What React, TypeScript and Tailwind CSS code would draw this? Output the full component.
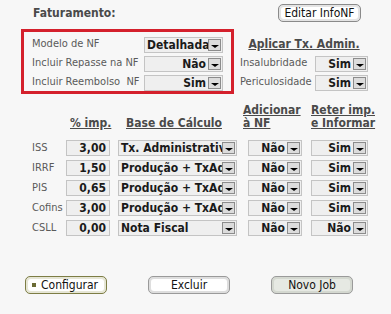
import React from 'react'

const font = { fontFamily: '"DejaVu Sans Condensed", "DejaVu Sans", Tahoma, sans-serif' }

interface SelectProps {
  value: string
  width: string
  align?: 'left' | 'right'
}

function Select({ value, width, align = 'right' }: SelectProps) {
  return (
    <div className={`${width} h-[16px] flex items-stretch border border-[#c4c4c4] bg-[#efefef]`}>
      <div
        className={`flex-1 flex items-center overflow-hidden whitespace-nowrap px-[2px] text-[12px] font-bold text-[#1a1a1a] leading-none ${
          align === 'left' ? 'justify-start' : 'justify-end'
        }`}
      >
        {value}
      </div>
      <div className="w-[13px] my-[1px] mr-[1px] border border-[#8c8c8c] bg-[#dcdcdc] flex items-end justify-center pb-[2px]">
        <div className="w-0 h-0 border-l-[4px] border-r-[4px] border-t-[3px] border-l-transparent border-r-transparent border-t-black" />
      </div>
    </div>
  )
}

function NumBox({ value }: { value: string }) {
  return (
    <div className="w-[44px] h-[16px] flex items-center justify-end px-[3px] border border-[#c4c4c4] bg-[#efefef] text-[12px] font-bold text-[#1a1a1a] leading-none">
      {value}
    </div>
  )
}

const taxes = [
  { name: 'ISS', pct: '3,00', base: 'Tx. Administrativa', add: 'Não', reter: 'Sim' },
  { name: 'IRRF', pct: '1,50', base: 'Produção + TxAdm', add: 'Não', reter: 'Sim' },
  { name: 'PIS', pct: '0,65', base: 'Produção + TxAdm', add: 'Não', reter: 'Sim' },
  { name: 'Cofins', pct: '3,00', base: 'Produção + TxAdm', add: 'Não', reter: 'Sim' },
  { name: 'CSLL', pct: '0,00', base: 'Nota Fiscal', add: 'Não', reter: 'Não' },
]

export default function App() {
  return (
    <div className="w-[391px] h-[314px] bg-[#f7f7f7] text-[#5a5a5a] text-[11px] overflow-hidden" style={font}>
      {/* header */}
      <div className="flex items-center pt-[4px] h-[22px]">
        <span className="ml-[33px] text-[12px] font-bold text-[#4a4a4a]">Faturamento:</span>
        <button className="ml-auto mr-[30px] w-[83px] h-[18px] rounded-[5px] border border-[#8a8a8a] bg-[#e4e4e4] p-[2px]">
          <div className="w-full h-full rounded-[3px] bg-white flex items-center justify-center text-[12px] text-[#111]">
            Editar InfoNF
          </div>
        </button>
      </div>

      {/* settings */}
      <div className="flex mt-[7px]">
        <div className="ml-[21px] w-[213px] h-[65px] border-[3px] border-[#d4202c] pl-[8px] pr-[8px] pt-[4px] flex flex-col gap-[2px]">
          <div className="flex items-center justify-between h-[17px]">
            <span>Modelo de NF</span>
            <Select value="Detalhada" width="w-[79px]" align="left" />
          </div>
          <div className="flex items-center justify-between h-[17px]">
            <span>Incluir Repasse na NF</span>
            <Select value="Não" width="w-[79px]" />
          </div>
          <div className="flex items-center justify-between h-[17px]">
            <span>Incluir Reembolso&nbsp; NF</span>
            <Select value="Sim" width="w-[79px]" />
          </div>
        </div>

        <div className="ml-[6px] w-[128px] flex flex-col">
          <div className="h-[24px] pt-[6px] text-center">
            <span className="font-bold underline text-[12px] text-[#4a4a4a]">Aplicar Tx. Admin.</span>
          </div>
          <div className="flex items-center justify-between h-[17px] mt-[2px]">
            <span>Insalubridade</span>
            <Select value="Sim" width="w-[53px]" />
          </div>
          <div className="flex items-center justify-between h-[17px] mt-[2px]">
            <span>Periculosidade</span>
            <Select value="Sim" width="w-[53px]" />
          </div>
        </div>
      </div>

      {/* tax table */}
      <div className="mt-[10px] flex items-end text-[12px] font-bold underline text-[#4a4a4a] leading-[13px]">
        <div className="ml-[70px] w-[56px]">% imp.</div>
        <div className="w-[117px]">Base de Cálculo</div>
        <div className="w-[68px]">
          Adicionar
          <br />à NF
        </div>
        <div>
          Reter imp.
          <br />e Informar
        </div>
      </div>

      <div className="mt-[10px] flex flex-col gap-[4px]">
        {taxes.map((t) => (
          <div key={t.name} className="flex items-center h-[16px]">
            <span className="ml-[32px] w-[34px]">{t.name}</span>
            <NumBox value={t.pct} />
            <div className="ml-[8px]">
              <Select value={t.base} width="w-[119px]" align="left" />
            </div>
            <div className="ml-[11px]">
              <Select value={t.add} width="w-[54px]" />
            </div>
            <div className="ml-[9px]">
              <Select value={t.reter} width="w-[57px]" />
            </div>
          </div>
        ))}
      </div>

      {/* footer buttons */}
      <div className="mt-[40px] flex">
        <button className="ml-[25px] w-[82px] h-[18px] rounded-[5px] border border-[#7d7d45] bg-[#e6e6d6] p-[2px]">
          <div className="w-full h-full rounded-[3px] bg-white flex items-center pl-[4px] gap-[5px] text-[12px] text-[#111]">
            <span className="w-[4px] h-[4px] bg-[#6b6b35]" />
            Configurar
          </div>
        </button>
        <button className="ml-[41px] w-[82px] h-[18px] rounded-[5px] border border-[#9a9a9a] bg-[#dedede] p-[2px]">
          <div className="w-full h-full rounded-[3px] bg-white flex items-center justify-center text-[12px] text-[#111]">
            Excluir
          </div>
        </button>
        <button className="ml-[41px] w-[82px] h-[18px] rounded-[5px] border border-[#9a9a9a] bg-[#d4d8d0] p-[2px]">
          <div className="w-full h-full rounded-[3px] bg-[#e6e9e3] flex items-center justify-center text-[12px] text-[#111]">
            Novo Job
          </div>
        </button>
      </div>
    </div>
  )
}
